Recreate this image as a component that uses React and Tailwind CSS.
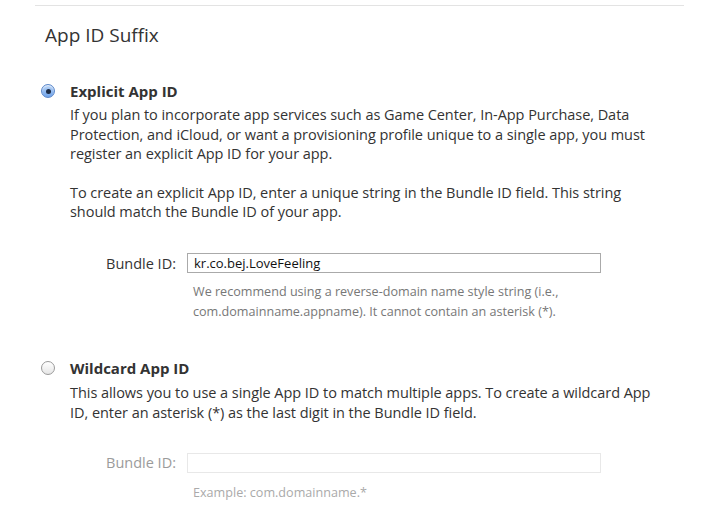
import React from "react";

function Radio({ checked }) {
    if (checked) {
        return <span className="relative flex h-[14px] w-[14px] shrink-0 items-center justify-center rounded-full border border-[#5a86c9] bg-gradient-to-b from-[#bcd6f7] to-[#6fa3ea] shadow-[inset_0_1px_1px_rgba(255,255,255,0.7)]">
            <span className="h-[5px] w-[5px] rounded-full bg-[#1c2b45]"></span>
        </span>;
    }
    return <span className="flex h-[14px] w-[14px] shrink-0 rounded-full border border-[#9a9a9a] bg-gradient-to-b from-[#ffffff] to-[#e6e6e6]"></span>;
}

function Field({ label, value, disabled }) {
    return <div className="flex items-center">
        <label className={"w-[117px] pr-[11px] text-right text-[14.5px] " + (disabled ? "text-[#9b9b9b]" : "text-[#333]")}>{label}</label>
        <div className={"flex h-[20px] w-[414px] items-center px-[6px] text-[13px] " + (disabled ? "border border-[#e8e8e8] bg-white" : "border border-[#aaa] bg-white text-[#111]")}>{value}</div>
    </div>;
}

export default function App() {
    return <div className="h-[529px] w-[723px] bg-white text-[#333]" style={{ fontFamily: "'Open Sans', 'Noto Sans', sans-serif" }}>
        <div className="pt-[5px]">
            <div className="ml-[35px] h-[1px] w-[649px] bg-[#e3e3e3]"></div>
        </div>
        <h2 className="ml-[45px] mt-[17px] text-[19px] leading-[24px]">App ID Suffix</h2>

        <div className="mt-[34px] flex items-center gap-[15px] pl-[41px]">
            <Radio checked />
            <span className="text-[15px] font-bold leading-[20px]">Explicit App ID</span>
        </div>
        <div className="ml-[70px] mt-[4px] w-[585px] text-[14.5px] leading-[19.5px] tracking-[-0.05px]">
            <p>If you plan to incorporate app services such as Game Center, In-App Purchase, Data Protection, and iCloud, or want a provisioning profile unique to a single app, you must register an explicit App ID for your app.</p>
            <p className="mt-[19px]">To create an explicit App ID, enter a unique string in the Bundle ID field. This string should match the Bundle ID of your app.</p>
        </div>
        <div className="ml-[70px] mt-[31px]">
            <Field label="Bundle ID:" value="kr.co.bej.LoveFeeling" />
            <div className="ml-[123px] mt-[8px] text-[12.6px] leading-[20px] text-[#777]">
                <p>We recommend using a reverse-domain name style string (i.e.,</p>
                <p>com.domainname.appname). It cannot contain an asterisk (*).</p>
            </div>
        </div>

        <div className="mt-[36px] flex items-center gap-[15px] pl-[41px]">
            <Radio />
            <span className="text-[15px] font-bold leading-[20px]">Wildcard App ID</span>
        </div>
        <div className="ml-[70px] mt-[5px] w-[585px] text-[14.5px] leading-[19.5px] tracking-[-0.05px]">
            <p>This allows you to use a single App ID to match multiple apps. To create a wildcard App ID, enter an asterisk (*) as the last digit in the Bundle ID field.</p>
        </div>
        <div className="ml-[70px] mt-[30px]">
            <Field label="Bundle ID:" value="" disabled />
            <p className="ml-[123px] mt-[9px] text-[12.6px] leading-[20px] text-[#aaa]">Example: com.domainname.*</p>
        </div>
    </div>;
}
